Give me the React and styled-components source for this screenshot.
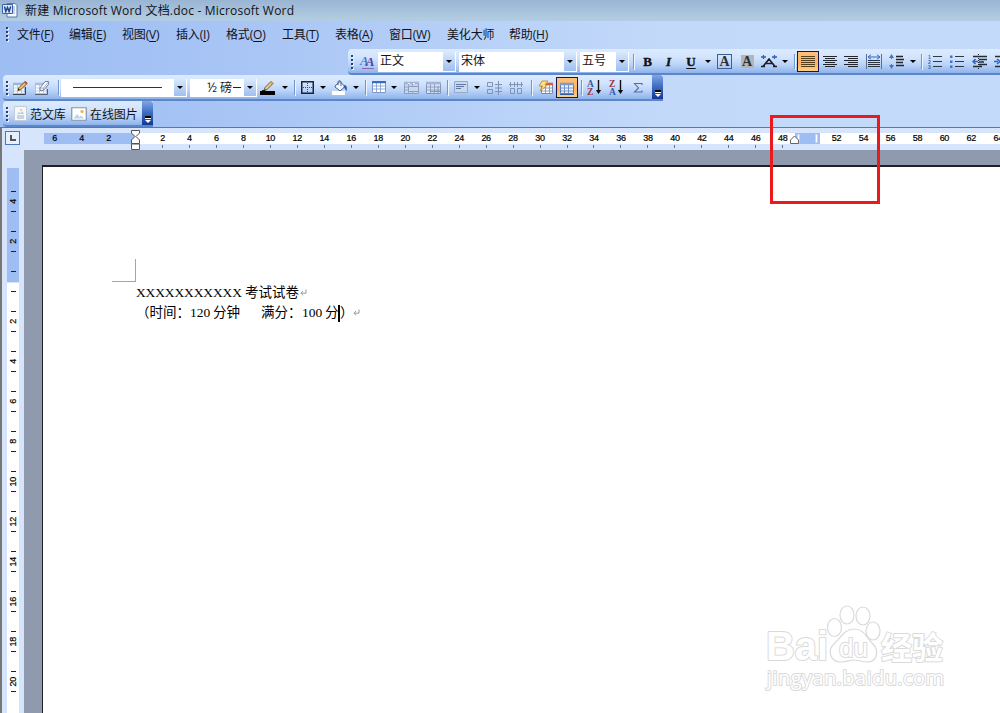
import React from "react";
import styled, { createGlobalStyle, css } from "styled-components";

const Global = createGlobalStyle`
  * { box-sizing: border-box; }
  html, body { margin: 0; padding: 0; overflow: hidden; }
  body { font-family: "Open Sans", "Noto Sans CJK SC", sans-serif; color: #10131c; }
`;

const Window = styled.div`
  position: relative;
  width: 1000px;
  height: 713px;
  overflow: hidden;
  display: flex;
  flex-direction: column;
  background: #fff;
`;

const TitleBar = styled.header`
  height: 21px;
  flex: none;
  display: flex;
  align-items: center;
  gap: 7px;
  padding: 0 0 1px 2px;
  font-size: 12px;
  letter-spacing: ${(p) => p.$spacing};
  white-space: pre;
  background: linear-gradient(#9ab5d4, #a4bfda 40%, #b0cbdf 85%, #b3cbe6);
`;

const Dock = styled.div`
  height: 106px;
  flex: none;
  display: flex;
  flex-direction: column;
  background: linear-gradient(90deg, #9dbdf3 0, #a8c5f5 25%, #b9d2f8 50%, #c3d9fa 67%, #c4dafa 100%);
`;

const MenuBar = styled.nav`
  height: 28px;
  flex: none;
  display: flex;
  align-items: center;
  padding: 0 0 2px 3px;
  font-size: 12px;
`;

const MenuItem = styled.div`
  width: ${(p) => p.$w}px;
  white-space: nowrap;
  letter-spacing: -0.15px;
  u { text-decoration-thickness: 1px; text-underline-offset: 1.5px; }
`;

const Toolbar = styled.div`
  height: 26px;
  flex: none;
  width: ${(p) => (p.$w ? p.$w + "px" : "auto")};
  margin-left: ${(p) => p.$left}px;
  display: flex;
  align-items: center;
  padding-top: 1px;
  border-radius: 4px 0 0 4px;
  border-bottom: 2px solid #5c86c9;
  background: linear-gradient(#dcebff 0, #d2e4fd 35%, #bad3f8 65%, #8eb3ea 100%);
  overflow: hidden;
  font-size: 12px;
`;

const GripBox = styled.div`
  width: ${(p) => p.$w || 8}px;
  flex: none;
  display: flex;
  flex-direction: column;
  align-items: center;
  gap: 2px;
  i { width: 2px; height: 2px; background: #27416f; box-shadow: 1px 1px 0 #eef5ff; }
`;
const Grip = ({ w }) => <GripBox $w={w}><i /><i /><i /><i /></GripBox>;

const Tool = styled.div`
  width: ${(p) => p.$w}px;
  height: 21px;
  flex: none;
  display: flex;
  align-items: center;
  justify-content: center;
  svg { display: block; flex: none; }
  ${(p) => p.$active && css`
    border: 1px solid #14144e;
    background: linear-gradient(#ffc07a, #fdb25e 60%, #ffd08c);
  `}
`;

const Letter = styled.span`
  font: bold 13px/16px "Liberation Serif", serif;
  -webkit-text-stroke: 0.4px #111;
  font-style: ${(p) => (p.$italic ? "italic" : "normal")};
  text-decoration: ${(p) => (p.$underline ? "underline" : "none")};
  text-underline-offset: 2px;
`;

const LetterBox = styled.span`
  width: 15px;
  height: 15px;
  font: bold 14px/14px "Liberation Serif", serif;
  text-align: center;
  color: #2b3038;
  border: 1px solid ${(p) => (p.$shade ? "transparent" : "#3e5f96")};
  background: ${(p) => (p.$shade ? "#b5b5b5" : "transparent")};
  background-clip: padding-box;
`;

const Divider = styled.div`
  width: ${(p) => p.$w}px;
  flex: none;
  display: flex;
  justify-content: center;
  &::before { content: ""; width: 1px; height: 15px; background: #7296d0; box-shadow: 1px 1px 0 #edf5ff; }
`;

const Down = styled.span`
  width: 0;
  height: 0;
  border: 3px solid transparent;
  border-top-color: #000;
  border-bottom: 0;
`;

const ComboBox = styled.div`
  width: ${(p) => p.$w}px;
  height: ${(p) => p.$h || 20}px;
  margin-right: ${(p) => p.$mr || 0}px;
  flex: none;
  display: flex;
  align-items: center;
  justify-content: space-between;
  background: #fff;
  padding: 0 1px 0 ${(p) => (p.$pad == null ? 2 : p.$pad)}px;
  line-height: 16px;
  white-space: pre;
  > span:first-child { margin-bottom: ${(p) => (p.$h ? 0 : 2)}px; }
`;
const ComboButton = styled.span`
  width: 12px;
  height: calc(100% - 1px);
  display: flex;
  align-items: center;
  justify-content: center;
  background: linear-gradient(#d9e8fd, #9ebff0);
`;
const Combo = ({ w, h, mr, pad, children }) => (
  <ComboBox $w={w} $h={h} $mr={mr} $pad={pad}>
    <span>{children}</span>
    <ComboButton><Down /></ComboButton>
  </ComboBox>
);

const LineSample = styled.div`
  width: 89px;
  height: 1px;
  background: #333;
`;

const Fraction = styled.b`
  font-size: 13px;
  font-weight: 500;
`;
const Dash = styled.i`
  display: inline-block;
  width: 8px;
  height: 1px;
  margin-left: 1px;
  background: #222;
  vertical-align: 4px;
`;

const CapBox = styled.div`
  width: 11px;
  height: 26px;
  margin: -1px 0 0 auto;
  flex: none;
  align-self: flex-start;
  display: flex;
  flex-direction: column;
  align-items: center;
  justify-content: flex-end;
  gap: 1px;
  padding-bottom: 4px;
  border-radius: 0 3px 3px 0;
  background: linear-gradient(#7fa6e6, #3d6cc0 45%, #0b2f8f);
  &::before { content: ""; width: 6px; height: 2px; background: #000; border-bottom: 1px solid #fff; }
  i { border: 3px solid transparent; border-top-color: #fff; border-bottom: 0; }
`;
const Cap = () => <CapBox><i /></CapBox>;

const Label = styled.span`
  width: ${(p) => p.$w}px;
  padding-left: ${(p) => p.$pad}px;
  flex: none;
  white-space: nowrap;
  letter-spacing: -0.1px;
`;

/* ---------- icons ---------- */
const Svg = ({ w = 16, h = 16, children }) => (
  <svg width={w} height={h} viewBox={`0 0 ${w} ${h}`} fill="none">{children}</svg>
);

const WordIcon = () => (
  <Svg>
    <path d="M5 1.5h8l2 2V15H5z" fill="#f4f8ff" stroke="#5877ae" />
    <path d="M8 5h5M8 7h5M8 9h5M8 11h5" stroke="#91a9d3" />
    <path d="M.5 2.5h10v9H.5z" fill="#dce8fb" stroke="#3c62a8" />
    <path d="M2.500 4.500l1.300 5 1.700-4 1.600 4 1.600-5" stroke="#1f458f" strokeWidth="1.500" />
  </Svg>
);

const Grid = ({ x = 1, y = 3, w = 13, h = 11, head = "#4576c8", stroke = "#7890ba", fill = "#fff" }) => (
  <g>
    <path d={`M${x + 0.5} ${y + 0.5}h${w - 1}v${h - 1}h-${w - 1}z`} fill={fill} stroke={stroke} />
    <path d={`M${x} ${y + 1}h${w}`} stroke={head} strokeWidth="2.4" />
    <path d={`M${x} ${y + 5}h${w}M${x} ${y + 8}h${w}M${x + 4.5} ${y + 2}v${h - 2}M${x + 8.5} ${y + 2}v${h - 2}`} stroke={stroke} strokeWidth=".8" />
  </g>
);

const DrawTable = () => (
  <Svg>
    <Grid x={1} y={3} w={12} h={11} stroke="#a9bde0" head="#9db4dc" />
    <path d="M1 14.500h12.500V7" stroke="#38445c" />
    <path d="M6 10.500l1-3 6-6 2 2-6 6z" fill="#edc66a" stroke="#705332" />
    <path d="M12 2.500l1.400-1.500L15.500 3 14 4.500z" fill="#c35245" />
    <path d="M6 10.500l.6-2 1.200 1.300z" fill="#111" />
  </Svg>
);
const Eraser = () => (
  <Svg>
    <Grid x={1} y={3} w={12} h={11} stroke="#b2c3e2" head="#a9bddf" />
    <path d="M1 14.500h12.500V9" stroke="#53617c" />
    <path d="M6 8l5-6.500h3.600v2.800l-5 6L6 10.500z" fill="#f7f9ff" stroke="#7082a5" />
    <path d="M6 8h3.500v2.500M9.500 8l5-6" stroke="#8b9abb" strokeWidth=".8" />
  </Svg>
);
const PenColor = () => (
  <Svg>
    <path d="M4 10.500l1-3 6-6 2 2-6 6z" fill="#e8cf8e" stroke="#665744" />
    <path d="M10 2.500l1.400-1.500L13.500 3 12 4.500z" fill="#d49a4b" />
    <path d="M2 10.500h3l1-1" stroke="#222" />
    <path d="M0 11h15v4H0z" fill="#000" />
  </Svg>
);
const Borders = () => (
  <Svg w={13} h={13}>
    <path d="M.75.75h11.500v11.500H.75z" stroke="#16253f" strokeWidth="1.500" />
    <path d="M6.500 2v9M2 6.500h9" stroke="#304b7b" strokeDasharray="1 1" />
  </Svg>
);
const Bucket = () => (
  <Svg>
    <path d="M3 6l5-4.500 5 5-5 4.500-5-4z" fill="#eef5ff" stroke="#456090" />
    <path d="M6 5V2.500C6 0 9 0 9 2.500V6" stroke="#456090" />
    <path d="M12 5c3 0 3.500 3 2.500 6C13 10 13 8 11.500 7z" fill="#365f9f" />
    <path d="M0 11h13v4H0z" fill="#fff" />
  </Svg>
);
const InsertTable = () => (
  <Svg w={14} h={13}><Grid x={0} y={0} w={14} h={12} head="#376bc8" stroke="#7c98c6" /></Svg>
);
const MergeCells = () => (
  <Svg w={15} h={14}>
    <Grid x={0} y={1} w={15} h={12} head="#a6b4cd" stroke="#8b9dbd" fill="#c9d8ef" />
    <path d="M4.500 5.500h10v5h-10z" fill="#c9d8ef" stroke="#8b9dbd" />
    <path d="M4 2.500h2M9 2.500h2" stroke="#e8effa" />
  </Svg>
);
const SplitCells = () => (
  <Svg w={15} h={14}>
    <Grid x={0} y={1} w={15} h={12} head="#a6b4cd" stroke="#8195b8" fill="#d4e1f5" />
    <path d="M12 5v8M4 10.500h10" stroke="#8396b7" />
  </Svg>
);
const AlignCell = () => (
  <Svg w={14} h={13}>
    <path d="M.5.5h13v11H.5z" fill="#c8d8ef" stroke="#95a8c8" />
    <path d="M2 3.500h10M2 5.500h8M2 7.500h5" stroke="#60779f" />
  </Svg>
);
const EvenRows = () => (
  <Svg w={15} h={14}>
    <path d="M.5 1.500h5v4h-5zM.5 8.500h5v4h-5zM8 3.500h7M8 10.500h7M8 7h7M11.500 0v14" stroke="#8093b5" />
  </Svg>
);
const EvenCols = () => (
  <Svg w={15} h={14}>
    <path d="M1.500 7.500h4v5h-4zM8.500 7.500h4v5h-4zM0 3.500h14M1.500 1v5M5.500 1v5M8.500 1v5M12.500 1v5" stroke="#8093b5" />
  </Svg>
);
const AutoFormat = () => (
  <Svg>
    <Grid x={3} y={3} w={12} h={11} head="#d65c3b" stroke="#7588ae" />
    <path d="M4 1h6L7 5h2.500L2 11l2.500-5H1z" fill="#ffdf7a" stroke="#c08324" strokeWidth=".8" />
  </Svg>
);
const GridLines = () => (
  <Svg>
    <Grid x={1} y={3} w={14} h={11} head="#7d9bcf" stroke="#5b7db7" fill="#e8f2ff" />
    <path d="M1 14.500h14" stroke="#3b5f9f" />
  </Svg>
);
const SortText = styled.text`
  font: bold 9.5px "Liberation Serif", serif;
`;
const Sort = ({ top, bottom }) => (
  <Svg w={15} h={17}>
    <SortText x="0" y="8" fill={top === "A" ? "#315da8" : "#a0343e"}>{top}</SortText>
    <SortText x="0" y="16" fill={top === "A" ? "#a0343e" : "#315da8"}>{bottom}</SortText>
    <path d="M11.500 1v12" stroke="#111" strokeWidth="1.400" />
    <path d="M8.800 11h5.400l-2.700 4z" fill="#111" />
  </Svg>
);
const Sigma = () => (
  <Svg w={11} h={12}><path d="M9 3V1.500H1.500L5.500 6l-4 4H9V8.500" stroke="#536f9d" strokeWidth="1.100" /></Svg>
);
const StylesText = styled.text`
  font: italic bold 13px "Liberation Serif", serif;
`;
const StylesIcon = () => (
  <Svg w={17} h={17}>
    <StylesText x="1" y="12"><tspan fill="#497cc5">A</tspan><tspan fill="#54419c" dx="-3" dy="1">A</tspan></StylesText>
    <path d="M3 15.500h12" stroke="#8a65ae" />
  </Svg>
);
const CharScale = () => (
  <Svg w={16} h={16}>
    <path d="M0 3h5M2.500 1v4M11 3h5M13.500 1v4" stroke="#315fb5" strokeWidth="1.300" />
    <path d="M0 12.500h4M12 12.500h4M2 12.500L8 5l6 7.500M5 9.500h6" stroke="#1b2029" strokeWidth="1.700" />
  </Svg>
);
const rows = (list) => list.map(([a, b], i) => `M${a} ${1.5 + i * 2}H${b}`).join("");
const Lines = ({ spec, color = "#20252e" }) => (
  <Svg w={14} h={13}><path d={rows(spec)} stroke={color} strokeWidth="1.200" /></Svg>
);
const full = [[0, 14], [0, 14], [0, 14], [0, 14], [0, 14], [0, 14]];
const centered = [[0, 14], [2, 12], [0, 14], [2, 12], [0, 14], [2, 12]];
const right = [[0, 14], [4, 14], [0, 14], [4, 14], [0, 14], [4, 14]];
const Distribute = () => (
  <Svg w={16} h={15}>
    <path d="M.5 0v15M15.500 0v15" stroke="#5b6f90" />
    <path d="M2 6.500h12M2 8.500h12M2 10.500h12M2 12.500h12" stroke="#27313f" strokeWidth="1.200" />
    <path d="M2 3h12M5 .8L2 3l3 2.200M11 .8L14 3l-3 2.200" stroke="#3267c1" />
  </Svg>
);
const LineSpacing = () => (
  <Svg w={15} h={15}>
    <path d="M2.500 0L0 4h5zM2.500 15L0 11h5z" fill="#4474c2" />
    <path d="M2.500 3v2M2.500 10v2" stroke="#4474c2" />
    <path d="M7 2.500h7M7 5.500h8M7 8.500h7M7 11.500h8" stroke="#20252e" strokeWidth="1.300" />
  </Svg>
);
const NumText = styled.text`
  font: bold 5px "Liberation Sans", sans-serif;
`;
const Numbered = () => (
  <Svg w={14} h={15}>
    {["1", "2", "3"].map((n, i) => <NumText key={n} x="0" y={4.5 + i * 5} fill="#3567ba">{n}</NumText>)}
    <path d="M5 2.500h9M5 7.500h9M5 12.500h9" stroke="#303846" />
  </Svg>
);
const Bulleted = () => (
  <Svg w={14} h={15}>
    <path d="M0 1.500h2.500V4H0zM0 6.500h2.500V9H0zM0 11.500h2.500V14H0z" fill="#4674c5" />
    <path d="M5 2.500h9M5 7.500h9M5 12.500h9" stroke="#303846" />
  </Svg>
);
const Indent = ({ flip }) => (
  <Svg w={16} h={15}>
    <path d="M1 2.500h14M7 5.500h8M7 8h5M7 10.500h8M1 12.500h9" stroke="#252c38" strokeWidth="1.300" />
    <path d="M6.500 0v15" stroke="#252c38" strokeDasharray="1 1" />
    <path d={flip ? "M0 7.500h4M3 5l3 2.500L3 10" : "M6 7.500H1M3.500 5L1 7.500 3.500 10"} stroke="#2f66c4" strokeWidth="1.500" />
  </Svg>
);
const DocIcon = () => (
  <Svg w={13} h={15}>
    <path d="M.5.5h12v14H.5z" fill="#f6f8fb" stroke="#c3cdd8" />
    <path d="M3 8l2-2 1.500 1.500L8 5l2 3z" fill="#aecbe6" /><path d="M3 10h7M3 12h7" stroke="#91b3d8" />
    <circle cx="7" cy="3.800" r=".9" fill="#f0b13d" />
  </Svg>
);
const PhotoIcon = () => (
  <Svg w={16} h={14}>
    <path d="M.75.75h14.500v12.500H.75z" fill="#fff" stroke="#8792a5" strokeWidth="1.200" />
    <path d="M2.500 11.500L6 7l2.500 3L10 8.500l3.500 3z" fill="#b9d4ed" />
    <circle cx="11" cy="4.500" r="1.600" fill="#f0b13d" />
  </Svg>
);

/* ---------- rulers and page ---------- */
const rulerFont = css`
  font: 10px/11px "Liberation Sans Narrow", "Liberation Sans", sans-serif;
  font-size: 9px;
  -webkit-text-stroke: 0.2px #000;
  letter-spacing: -0.3px;
  color: #000;
`;
const Workspace = styled.main`
  flex: 1;
  min-height: 0;
  display: flex;
  border-top: 1px solid #71747a;
  border-left: 2px solid #777;
`;
const VerticalArea = styled.aside`
  width: 22px;
  flex: none;
  background: #d6e5fb;
  display: flex;
  flex-direction: column;
  align-items: flex-start;
  padding: 3px 0 0 3px;
`;
const TabSelector = styled.div`
  width: 15px;
  height: 14px;
  flex: none;
  border: 1px solid #4a76c0;
  background: #e6effd;
  display: flex;
  align-items: center;
  justify-content: center;
  i { width: 6px; height: 6px; border-left: 2px solid #555; border-bottom: 2px solid #555; }
`;
const VerticalRuler = styled.div`
  margin: 23px 0 0 2px;
  width: 12px;
  flex: 1;
  min-height: 0;
  padding-top: 14px;
  overflow: hidden;
  background: linear-gradient(#9dbdf3 0 114px, #d6e5fb 114px 115px, #fff 115px);
`;
const VerticalCell = styled.div`
  height: 40px;
  padding: 9px 0 10px;
  display: flex;
  flex-direction: column;
  align-items: center;
  justify-content: space-between;
  &::before, &::after { content: ""; width: 5px; height: 1px; background: #222; flex: none; }
  span {
    ${rulerFont}
    writing-mode: vertical-rl;
    transform: rotate(180deg);
  }
`;
const RightArea = styled.div`
  flex: 1;
  min-width: 0;
  display: flex;
  flex-direction: column;
  background: #909aaf;
`;
const HorizontalArea = styled.div`
  height: 22px;
  flex: none;
  background: #d6e5fb;
  padding: 5px 0 0 20px;
  display: flex;
  overflow: hidden;
`;
const RulerPart = styled.div`
  flex: none;
  width: ${(p) => p.$w}px;
  height: 11px;
  display: flex;
  justify-content: ${(p) => (p.$end ? "flex-end" : "flex-start")};
  padding: 0 ${(p) => p.$end || 0}px 0 ${(p) => p.$pad || 0}px;
  background: ${(p) => (p.$blue ? "#9dbdf3" : "#fff")};
`;
const RulerCell = styled.div`
  width: 26.97px;
  height: 16px;
  flex: none;
  text-align: center;
  ${rulerFont}
  display: flex;
  flex-direction: column;
  align-items: center;
  gap: 1px;
  &::after { content: ""; width: 1px; height: 3px; background: ${(p) => (p.$tick ? "#6b7585" : "transparent")}; }
`;
const MarginZone = styled.div`
  width: 25px;
  height: 11px;
  flex: none;
  display: flex;
  align-items: center;
  justify-content: space-between;
  padding: 0 2px;
  background: #9dbdf3;
  i { width: 3px; height: 9px; background: #fff; border: 1px solid #c6d4ea; }
`;
const Marker = styled.svg`
  position: absolute;
  left: ${(p) => p.$x}px;
  top: ${(p) => p.$y}px;
`;
const Page = styled.article`
  flex: 1;
  min-height: 0;
  margin: 15px 0 0 18px;
  border-top: 2px solid #20202c;
  border-left: 1px solid #20202c;
  background: #fff;
  padding: 92px 0 0 69px;
`;
const CropCorner = styled.div`
  width: 24px;
  height: 23px;
  margin-bottom: 1px;
  border-right: 1px solid #a5a5a5;
  border-bottom: 1px solid #a5a5a5;
`;
const DocLine = styled.p`
  margin: 0 0 0 24px;
  height: 20px;
  display: flex;
  align-items: center;
  color: #000;
  font: 13.5px/20px "Liberation Serif", "Noto Sans CJK SC", serif;
  white-space: pre;
`;
const Run = styled.span`
  width: ${(p) => p.$w}px;
  flex: none;
  letter-spacing: ${(p) => p.$ls || 0}px;
`;
const Caret = styled.i`
  width: 2px;
  height: 17px;
  margin: 0 0 0 -2px;
  background: #000;
`;
const Return = () => (
  <Svg w={7} h={8}><path d="M6 .5v3.700H1.500M3 2L1 4.200 3 6.400" stroke="#8c8c8c" strokeWidth=".9" /></Svg>
);
const Highlight = styled.div`
  position: absolute;
  left: 770px;
  top: 115px;
  width: 110px;
  height: 89px;
  border: 3px solid #e9191c;
`;
const Watermark = styled.svg`
  position: absolute;
  left: 760px;
  top: 600px;
  text { fill: #fff; stroke: #dadada; stroke-width: 2px; paint-order: stroke; stroke-linejoin: round; }
`;
const Brand = styled.text`
  font: bold 40px "Liberation Sans", sans-serif;
`;
const BrandSmall = styled.text`
  font: 26px "Liberation Sans", sans-serif;
`;
const BrandHan = styled.text`
  font: 700 31px "Noto Sans CJK SC", sans-serif;
`;
const Site = styled.text`
  font: 20px "Open Sans", sans-serif;
`;

const menus = [
  ["文件", "F", 52], ["编辑", "E", 53], ["视图", "V", 54], ["插入", "I", 50], ["格式", "O", 56],
  ["工具", "T", 53], ["表格", "A", 54], ["窗口", "W", 58], ["美化大师", null, 62], ["帮助", "H", 60],
];
const evens = (from, to) => {
  const out = [];
  for (let n = from; n <= to; n += 2) out.push(n);
  return out;
};
const Arrow = ({ w }) => <Tool $w={w}><Down /></Tool>;

export default function App() {
  return (
    <Window>
      <Global />
      <TitleBar $spacing="0.2px"><WordIcon /><span>新建 Microsoft Word 文档.doc - Microsoft Word</span></TitleBar>
      <Dock>
        <MenuBar>
          <Grip w={7} />
          <MenuItem $w={7} />
          {menus.map(([name, key, w]) => (
            <MenuItem key={name} $w={w}>{name}{key && <>(<u>{key}</u>)</>}</MenuItem>
          ))}
        </MenuBar>

        <Toolbar $left={348}>
          <Grip />
          <Tool $w={22}><StylesIcon /></Tool>
          <Combo w={78} mr={3}>正文</Combo>
          <Combo w={118} mr={3}>宋体</Combo>
          <Combo w={49}>五号</Combo>
          <Divider $w={9} />
          <Tool $w={19}><Letter>B</Letter></Tool>
          <Tool $w={23}><Letter $italic>I</Letter></Tool>
          <Tool $w={22}><Letter $underline>U</Letter></Tool>
          <Arrow w={11} />
          <Tool $w={23}><LetterBox>A</LetterBox></Tool>
          <Tool $w={22}><LetterBox $shade>A</LetterBox></Tool>
          <Tool $w={21}><CharScale /></Tool>
          <Arrow w={12} />
          <Divider $w={6} />
          <Tool $w={22} $active><Lines spec={full} color="#57401c" /></Tool>
          <Tool $w={21}><Lines spec={centered} /></Tool>
          <Tool $w={22}><Lines spec={right} /></Tool>
          <Tool $w={23}><Distribute /></Tool>
          <Tool $w={23}><LineSpacing /></Tool>
          <Arrow w={9} />
          <Divider $w={8} />
          <Tool $w={20}><Numbered /></Tool>
          <Tool $w={23}><Bulleted /></Tool>
          <Tool $w={23}><Indent /></Tool>
          <Tool $w={22}><Indent flip /></Tool>
        </Toolbar>

        <Toolbar $left={3} $w={660}>
          <Grip />
          <Tool $w={18}><DrawTable /></Tool>
          <Tool $w={26}><Eraser /></Tool>
          <Divider $w={6} />
          <Combo w={126} h={18} mr={3} pad={12}><LineSample /></Combo>
          <Combo w={67} h={18} pad={17}><Fraction>½</Fraction> 磅<Dash /></Combo>
          <Tool $w={22}><PenColor /></Tool>
          <Arrow w={11} />
          <Divider $w={8} />
          <Tool $w={19}><Borders /></Tool>
          <Arrow w={12} />
          <Tool $w={22}><Bucket /></Tool>
          <Arrow w={10} />
          <Divider $w={8} />
          <Tool $w={19}><InsertTable /></Tool>
          <Arrow w={12} />
          <Tool $w={23}><MergeCells /></Tool>
          <Tool $w={21}><SplitCells /></Tool>
          <Divider $w={7} />
          <Tool $w={20}><AlignCell /></Tool>
          <Arrow w={12} />
          <Tool $w={22}><EvenRows /></Tool>
          <Tool $w={22}><EvenCols /></Tool>
          <Divider $w={8} />
          <Tool $w={21}><AutoFormat /></Tool>
          <Tool $w={22} $active><GridLines /></Tool>
          <Divider $w={7} />
          <Tool $w={18}><Sort top="A" bottom="Z" /></Tool>
          <Tool $w={26}><Sort top="Z" bottom="A" /></Tool>
          <Tool $w={18}><Sigma /></Tool>
          <Cap />
        </Toolbar>

        <Toolbar $left={3} $w={150}>
          <Grip />
          <Tool $w={18}><DocIcon /></Tool>
          <Label $w={41} $pad={1}>范文库</Label>
          <Tool $w={18}><PhotoIcon /></Tool>
          <Label $w={50} $pad={2}>在线图片</Label>
          <Cap />
        </Toolbar>
      </Dock>

      <Workspace>
        <VerticalArea>
          <TabSelector><i /></TabSelector>
          <VerticalRuler>
            {["4", "2", "", ...evens(2, 20)].map((n, i) => (
              <VerticalCell key={i}><span>{n}</span></VerticalCell>
            ))}
          </VerticalRuler>
        </VerticalArea>
        <RightArea>
          <HorizontalArea>
            <RulerPart $blue $w={91} $end={13}>
              {[6, 4, 2].map((n) => <RulerCell key={n}>{n}</RulerCell>)}
            </RulerPart>
            <RulerPart $w={660} $pad={14}>
              {evens(2, 48).map((n) => <RulerCell key={n} $tick>{n}</RulerCell>)}
            </RulerPart>
            <MarginZone><i /><i /></MarginZone>
            <RulerPart $w={190} $pad={3}>
              {evens(52, 64).map((n) => <RulerCell key={n}>{n}</RulerCell>)}
            </RulerPart>
          </HorizontalArea>
          <Page>
            <CropCorner />
            <DocLine>
              <Run $w={109} $ls={-0.13}>XXXXXXXXXXX</Run>
              <Run $w={55}>考试试卷</Run>
              <Return />
            </DocLine>
            <DocLine>
              <Run $w={54}>（时间：</Run>
              <Run $w={23}>120</Run>
              <Run $w={48}>分钟</Run>
              <Run $w={41}>满分：</Run>
              <Run $w={23}>100</Run>
              <Run $w={15}>分</Run>
              <Caret />
              <Run $w={13}>）</Run>
              <Return />
            </DocLine>
          </Page>
        </RightArea>
      </Workspace>

      <Marker $x={130} $y={130} width="11" height="20" viewBox="0 0 11 20">
        <path d="M1.500.5h8v2.500l-3.500 3.500L9.500 10v3.500h-8V10L5 6.500 1.500 3z" fill="#fff" stroke="#555" />
        <path d="M1.500 14h8v5.500h-8z" fill="#fff" stroke="#555" />
      </Marker>
      <Marker $x={789} $y={135} width="11" height="10" viewBox="0 0 11 10">
        <path d="M5.500 1L9.500 5v3.500h-8V5z" fill="#fff" stroke="#666" />
      </Marker>
      <Highlight />
      <Watermark width="200" height="100" viewBox="0 0 200 100">
        <g fill="#fff" stroke="#dadada" strokeWidth="1.200">
          <ellipse cx="74.500" cy="27.500" rx="7" ry="9" />
          <ellipse cx="87" cy="15" rx="7" ry="9" />
          <ellipse cx="103" cy="16" rx="7" ry="9" />
          <ellipse cx="113" cy="31" rx="7" ry="9" />
          <path d="M94 29C84 29 81 38 74 44C67 50 70 62 81 62C87 62 89 60 94 60C99 60 102 62 107 62C118 62 119 50 113 44C106 37 104 29 94 29Z" />
        </g>
        <Brand x="6" y="60" textLength="62" lengthAdjust="spacingAndGlyphs">Bai</Brand>
        <BrandSmall x="79" y="57" textLength="29" lengthAdjust="spacingAndGlyphs">du</BrandSmall>
        <BrandHan x="121" y="59" textLength="62">经验</BrandHan>
        <Site x="7" y="85" textLength="177">jingyan.baidu.com</Site>
      </Watermark>
    </Window>
  );
}
